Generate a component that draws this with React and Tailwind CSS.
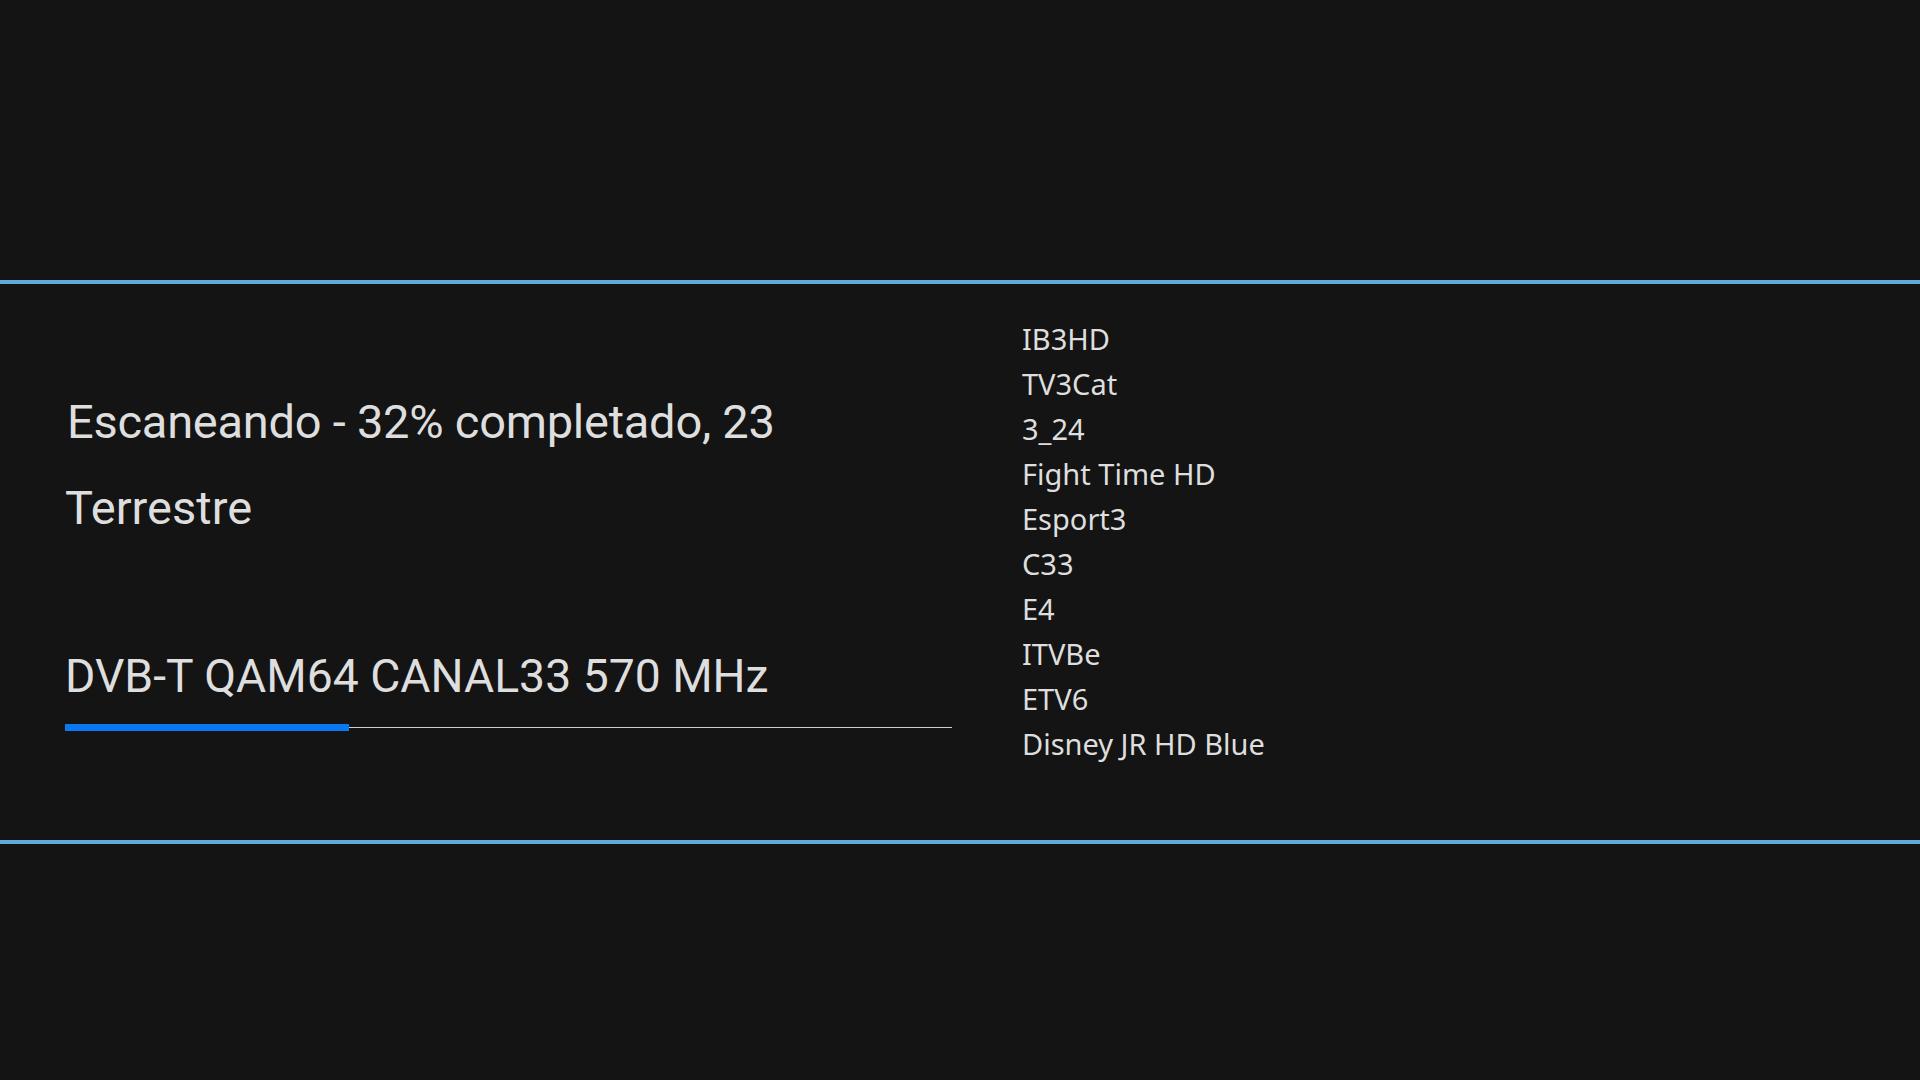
export default function App() {
  const channels = [
    "IB3HD",
    "TV3Cat",
    "3_24",
    "Fight Time HD",
    "Esport3",
    "C33",
    "E4",
    "ITVBe",
    "ETV6",
    "Disney JR HD Blue",
  ];
  return (
    <div className="w-[1920px] h-[1080px] bg-[#141414] flex flex-col overflow-hidden">
      <div className="h-[280px] shrink-0" />
      <div className="h-[4px] bg-[#64a9dc] shrink-0" />
      <div className="h-[556px] shrink-0 flex">
        <div
          className="w-[952px] pl-[65px] flex flex-col text-[#dedede]"
          style={{ fontFamily: "Roboto, sans-serif" }}
        >
          <div className="mt-[114px] ml-[2px] text-[47px] leading-none tracking-[-0.25px] whitespace-nowrap">
            Escaneando - 32% completado, 23
          </div>
          <div className="mt-[39px] text-[47px] leading-none whitespace-nowrap">
            Terrestre
          </div>
          <div className="mt-[122px] text-[46.3px] leading-none whitespace-nowrap">
            DVB-T QAM64 CANAL33 570 MHz
          </div>
          <div className="mt-[25px] relative h-[7px] flex items-center">
            <div className="w-full h-px bg-[#cfcfcf]" />
            <div className="absolute left-0 top-0 h-[7px] w-[32%] bg-[#0a78f0]" />
          </div>
        </div>
        <div
          className="ml-[70px] pt-[32px] flex flex-col text-[#dedede] text-[29px] leading-[45px]"
          style={{ fontFamily: '"Noto Sans", sans-serif' }}
        >
          {channels.map((c) => (
            <div key={c} className="whitespace-nowrap">
              {c}
            </div>
          ))}
        </div>
      </div>
      <div className="h-[4px] bg-[#64a9dc] shrink-0" />
      <div className="flex-1" />
    </div>
  );
}
